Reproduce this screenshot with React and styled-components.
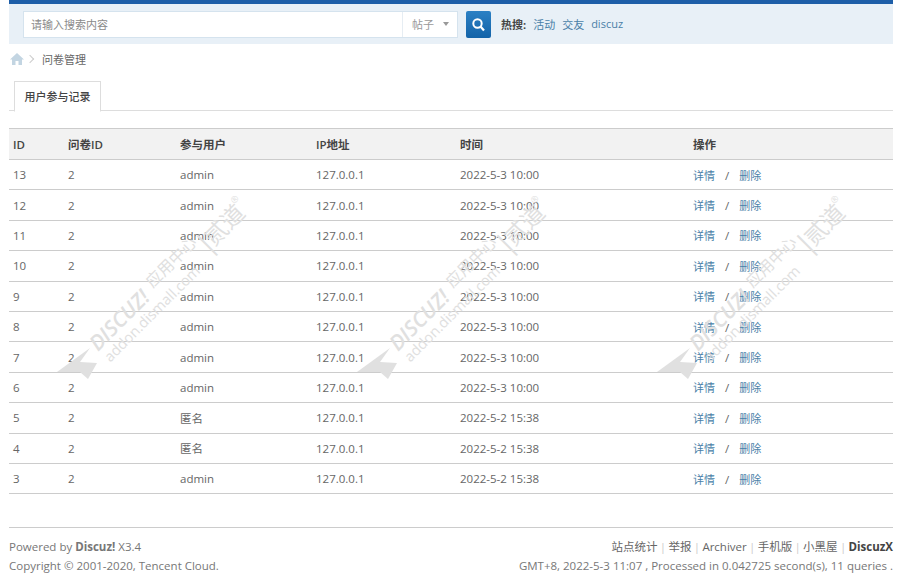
import React from 'react';
import styled, { createGlobalStyle } from 'styled-components';

const GlobalStyle = createGlobalStyle`
  html, body {
    margin: 0;
    padding: 0;
    background: #fff;
    font-family: "Open Sans", "Noto Sans CJK SC", sans-serif;
    font-size: 12px;
    color: #666;
  }
`;

const Page = styled.div`
  position: relative;
  width: 910px;
  height: 586px;
  padding: 0 17px 0 9px;
  box-sizing: border-box;
  overflow: hidden;
`;

const TopLine = styled.div`
  height: 4px;
  background: #1d5ea8;
`;

const SearchBand = styled.div`
  height: 40px;
  background: #e8f0f7;
  display: flex;
  align-items: center;
  padding: 0 0 0 14px;
`;

const SearchBox = styled.div`
  width: 435px;
  height: 27px;
  display: flex;
  background: #fff;
  border: 1px solid #d5e3ee;
  box-sizing: border-box;
`;

const SearchInput = styled.div`
  flex: 1;
  padding-left: 7px;
  line-height: 25px;
  color: #8a8a8a;
  font-size: 11px;
`;

const SearchType = styled.div`
  width: 55px;
  border-left: 1px solid #e6edf3;
  display: flex;
  align-items: center;
  padding-left: 9px;
  box-sizing: border-box;
  color: #999;
  font-size: 11px;
  &::after {
    content: '';
    margin-left: 9px;
    border: 3.5px solid transparent;
    border-top: 4px solid #999;
    border-bottom: 0;
  }
`;

const SearchButton = styled.div`
  width: 25px;
  height: 27px;
  margin-left: 8px;
  border-radius: 2px;
  background: linear-gradient(#2b80c4, #1363a8);
  display: flex;
  align-items: center;
  justify-content: center;
`;

const HotWords = styled.div`
  margin-left: 10px;
  display: flex;
  gap: 7px;
  font-size: 11px;
  color: #444;
`;

const HotLink = styled.span`
  color: #4a7fa8;
`;

const Crumbs = styled.div`
  height: 30px;
  padding-left: 1px;
  display: flex;
  align-items: center;
  font-size: 11px;
  color: #666;
`;

const CrumbSep = styled.span`
  width: 5px;
  height: 5px;
  margin: 0 9px 0 3px;
  border-top: 1px solid #ccc;
  border-right: 1px solid #ccc;
  transform: rotate(45deg);
`;

const Tabs = styled.div`
  height: 29px;
  margin-top: 8px;
  padding-left: 5px;
  border-bottom: 1px solid #ddd;
  box-sizing: content-box;
`;

const Tab = styled.div`
  width: 85px;
  height: 29px;
  border: 1px solid #ddd;
  border-bottom: 1px solid #fff;
  box-sizing: content-box;
  margin-top: -1px;
  line-height: 29px;
  text-align: center;
  background: #fff;
  color: #444;
  font-size: 11px;
  font-weight: 500;
`;

const Table = styled.table`
  width: 884px;
  margin-top: 17px;
  border-collapse: collapse;
  table-layout: fixed;
  border-top: 1px solid #ccc;
`;

const HeadCell = styled.th`
  height: 30px;
  padding: 0 0 0 4px;
  background: #f2f2f2;
  border-bottom: 1px solid #ccc;
  text-align: left;
  font-size: 11.5px;
  font-weight: 600;
  color: #444;
`;

const Cell = styled.td`
  height: 29.4px;
  padding: 0 0 0 4px;
  border-bottom: 1px solid #ccc;
  color: #666;
  font-size: 11.5px;
`;

const ActionLink = styled.span`
  color: #4a7fa8;
  font-size: 11px;
`;

const Slash = styled.span`
  margin: 0 10px;
  color: #666;
`;

const Footer = styled.div`
  margin-top: 33px;
  border-top: 1px solid #ccc;
  padding-top: 9px;
  display: flex;
  justify-content: space-between;
  line-height: 19px;
  font-size: 11.5px;
  color: #777;
`;

const FooterRight = styled.div`
  text-align: right;
`;

const FooterLinks = styled.div`
  color: #666;
  span {
    margin: 0 2.3px;
    color: #ccc;
  }
  b {
    color: #444;
  }
`;

const Watermark = styled.div`
  position: absolute;
  left: ${(p) => p.$left}px;
  top: 190px;
  width: 200px;
  height: 200px;
  pointer-events: none;
  color: #e0e0e0;
`;

const MarkArrow = styled.svg`
  position: absolute;
  left: 0;
  top: 155px;
`;

const MarkText = styled.div`
  position: absolute;
  left: ${(p) => p.$left}px;
  top: ${(p) => p.$top}px;
  transform: rotate(-45deg);
  transform-origin: 0 100%;
  white-space: nowrap;
  line-height: 1;
  font-size: ${(p) => p.$size}px;
  font-weight: ${(p) => p.$weight || 400};
  font-style: ${(p) => (p.$italic ? 'italic' : 'normal')};
`;

const rows = [
  [13, 'admin', '2022-5-3 10:00'],
  [12, 'admin', '2022-5-3 10:00'],
  [11, 'admin', '2022-5-3 10:00'],
  [10, 'admin', '2022-5-3 10:00'],
  [9, 'admin', '2022-5-3 10:00'],
  [8, 'admin', '2022-5-3 10:00'],
  [7, 'admin', '2022-5-3 10:00'],
  [6, 'admin', '2022-5-3 10:00'],
  [5, '匿名', '2022-5-2 15:38'],
  [4, '匿名', '2022-5-2 15:38'],
  [3, 'admin', '2022-5-2 15:38'],
];

function Mark({ left }) {
  return (
    <Watermark $left={left}>
      <MarkArrow width="42" height="36" viewBox="0 0 42 36">
        <path d="M0 27 L33 3 L23 17 L40 18 L31 34 L23 27 Z" fill="#e0e0e0" />
      </MarkArrow>
      <MarkText $left={43} $top={143} $size={21} $italic $weight={600}>DISCUZ!</MarkText>
      <MarkText $left={97} $top={84} $size={16}>应用中心</MarkText>
      <MarkText $left={55} $top={160} $size={14.5}>addon.dismall.com</MarkText>
      <MarkText $left={152} $top={40} $size={28}>|</MarkText>
      <MarkText $left={159} $top={36} $size={23}>贰道</MarkText>
      <MarkText $left={178} $top={6} $size={9}>®</MarkText>
    </Watermark>
  );
}

export default function App() {
  return (
    <Page>
      <GlobalStyle />
      <TopLine />
      <SearchBand>
        <SearchBox>
          <SearchInput>请输入搜索内容</SearchInput>
          <SearchType>帖子</SearchType>
        </SearchBox>
        <SearchButton>
          <svg width="15" height="15" viewBox="0 0 15 15">
            <circle cx="6.5" cy="6.5" r="4.2" fill="none" stroke="#fff" strokeWidth="2" />
            <path d="M9.5 9.5 L13 13.5" stroke="#fff" strokeWidth="2.2" />
          </svg>
        </SearchButton>
        <HotWords>
          <b>热搜:</b>
          <HotLink>活动</HotLink>
          <HotLink>交友</HotLink>
          <HotLink>discuz</HotLink>
        </HotWords>
      </SearchBand>
      <Crumbs>
        <svg width="14" height="12" viewBox="0 0 14 12">
          <path d="M7 0 L14 6.5 H12 V12 H8.5 V8 H5.5 V12 H2 V6.5 H0 Z" fill="#c3d5e2" />
        </svg>
        <CrumbSep />
        问卷管理
      </Crumbs>
      <Tabs>
        <Tab>用户参与记录</Tab>
      </Tabs>
      <Table>
        <colgroup>
          <col width="55" />
          <col width="112" />
          <col width="136" />
          <col width="144" />
          <col width="233" />
          <col />
        </colgroup>
        <thead>
          <tr>
            <HeadCell>ID</HeadCell>
            <HeadCell>问卷ID</HeadCell>
            <HeadCell>参与用户</HeadCell>
            <HeadCell>IP地址</HeadCell>
            <HeadCell>时间</HeadCell>
            <HeadCell>操作</HeadCell>
          </tr>
        </thead>
        <tbody>
          {rows.map(([id, user, time]) => (
            <tr key={id}>
              <Cell>{id}</Cell>
              <Cell>2</Cell>
              <Cell>{user}</Cell>
              <Cell>127.0.0.1</Cell>
              <Cell>{time}</Cell>
              <Cell>
                <ActionLink>详情</ActionLink>
                <Slash>/</Slash>
                <ActionLink>删除</ActionLink>
              </Cell>
            </tr>
          ))}
        </tbody>
      </Table>
      <Footer>
        <div>
          Powered by <b>Discuz!</b> X3.4
          <br />
          Copyright © 2001-2020, Tencent Cloud.
        </div>
        <FooterRight>
          <FooterLinks>
            站点统计<span>|</span>举报<span>|</span>Archiver<span>|</span>手机版<span>|</span>小黑屋<span>|</span><b>DiscuzX</b>
          </FooterLinks>
          GMT+8, 2022-5-3 11:07 , Processed in 0.042725 second(s), 11 queries .
        </FooterRight>
      </Footer>
      <Mark left={57} />
      <Mark left={357} />
      <Mark left={657} />
    </Page>
  );
}
